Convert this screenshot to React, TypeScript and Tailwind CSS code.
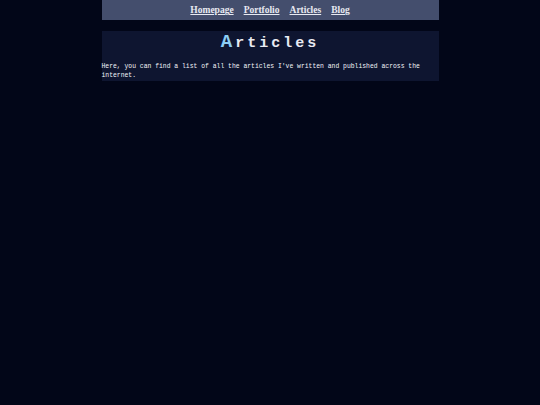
import React from "react";

const links = ["Homepage", "Portfolio", "Articles", "Blog"];

export default function App() {
  return (
    <div className="min-h-screen w-full bg-[#020618]">
      <div className="mx-auto w-[337px]">
        <nav className="flex h-[20px] items-center justify-center gap-[10px] bg-[#444e6d] pt-[1px]">
          {links.map((l) => (
            <a
              key={l}
              href="#"
              className="text-[9.5px] font-bold text-[#e8eaf2] underline"
              style={{ fontFamily: '"Liberation Serif", serif' }}
            >
              {l}
            </a>
          ))}
        </nav>
        <section className="mt-[11px] bg-[#0e1530] pb-[1px]">
          <h1
            className="pt-[1px] text-center text-[15px] font-bold leading-[20px] tracking-[3px] text-[#e8eaf2]"
            style={{ fontFamily: '"Liberation Mono", monospace' }}
          >
            <span className="text-[19px] text-[#8ccdf5]">A</span>rticles
          </h1>
          <p
            className="mt-[8px] text-[6.4px] leading-[9px] text-[#f2f4f8]"
            style={{ fontFamily: '"Liberation Mono", monospace' }}
          >
            Here, you can find a list of all the articles I've written and published across the internet.
          </p>
        </section>
      </div>
    </div>
  );
}
